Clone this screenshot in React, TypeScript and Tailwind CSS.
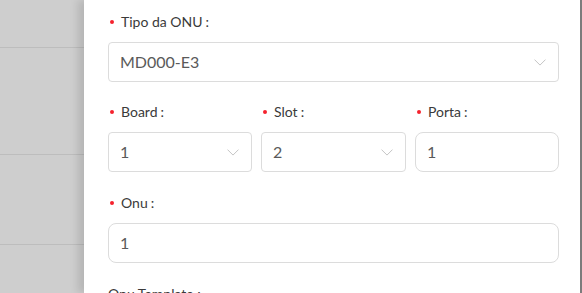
function Label({ text }: { text: string }) {
  return (
    <div className="flex items-center h-5 text-[14px] text-[#3a3a3a] leading-5">
      <span className="w-[4px] h-[4px] rounded-full bg-[#f5222d] ml-[2px] mr-[7px]"></span>
      <span>{text}</span>
      <span className="ml-[3px]">:</span>
    </div>
  );
}

function Chevron() {
  return (
    <svg width="12" height="7" viewBox="0 0 12 7" fill="none" className="shrink-0">
      <path d="M0.5 0.6 L6 6.1 L11.5 0.6" stroke="#c4c4c4" strokeWidth="1" />
    </svg>
  );
}

function Select({ value, className }: { value: string; className: string }) {
  return (
    <div className={`h-10 border border-[#dcdcdc] rounded-[4px] bg-white flex items-center justify-between pl-[11px] pr-[12px] ${className}`}>
      <span className="text-[16px] text-[#5a5a5a]">{value}</span>
      <Chevron />
    </div>
  );
}

function Input({ value, className }: { value: string; className: string }) {
  return (
    <div className={`h-10 border border-[#dcdcdc] rounded-[8px] bg-white flex items-center pl-[11px] ${className}`}>
      <span className="text-[16px] text-[#5a5a5a]">{value}</span>
    </div>
  );
}

export default function App() {
  return (
    <div className="w-[582px] h-[293px] overflow-hidden flex font-['Lato',sans-serif]">
      {/* dimmed page behind */}
      <div className="w-[84px] h-full bg-[#cecece] flex flex-col shrink-0">
        <div className="h-[48px] border-b border-[#bdbdbd]"></div>
        <div className="h-[107px] border-b border-[#bdbdbd]"></div>
        <div className="h-[90px] border-b border-[#bdbdbd]"></div>
      </div>

      {/* drawer */}
      <div className="relative w-[496px] h-full bg-white shrink-0 shadow-[-6px_0_8px_rgba(0,0,0,0.12)] pl-6 pt-[12px]">
        <Label text="Tipo da ONU" />
        <Select value="MD000-E3" className="w-[451px] mt-[10px]" />

        <div className="flex gap-[9px] mt-[20px]">
          <div className="w-[144px]">
            <Label text="Board" />
            <Select value="1" className="mt-[10px]" />
          </div>
          <div className="w-[145px]">
            <Label text="Slot" />
            <Select value="2" className="mt-[10px]" />
          </div>
          <div className="w-[144px]">
            <Label text="Porta" />
            <Input value="1" className="mt-[10px]" />
          </div>
        </div>

        <div className="mt-[21px]">
          <Label text="Onu" />
          <Input value="1" className="w-[451px] mt-[10px]" />
        </div>

        <div className="mt-[21px] text-[14px] text-[#3a3a3a] leading-5">Onu Template :</div>
      </div>

      <div className="w-[2px] h-full bg-[#7d7d7d] shrink-0"></div>
    </div>
  );
}
